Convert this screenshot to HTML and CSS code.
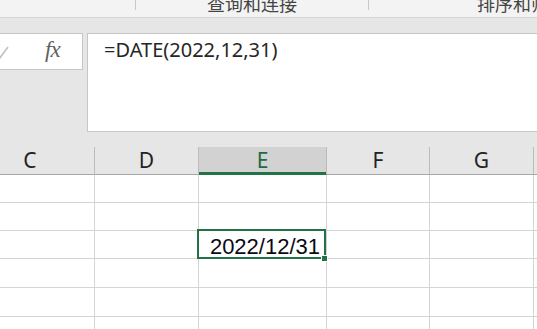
FILE: index.html
```html
<!DOCTYPE html>
<html>
<head>
	<title>DATE</title>
	<meta charset="UTF-8">
	<link rel="stylesheet" href="styles.css">
</head>
<body>

    <div class="ribbon">
        <div class="group first"></div>
        <div class="group mid">查询和连接</div>
        <div class="group last">排序和筛选</div>
    </div>

    <div class="bar">
        <div class="namebox">
            <svg class="ok" width="10" height="16" viewBox="0 0 10 16">
                <path d="M-6 6 L-1 13 L8 1" fill="none" stroke="#c4c4c4" stroke-width="1.8"/>
            </svg>
            <span class="fx">fx</span>
        </div>
        <div class="formula">=DATE(2022,12,31)</div>
    </div>

    <div class="sheet">
        <div class="head">C</div>
        <div class="head">D</div>
        <div class="head sel">E</div>
        <div class="head">F</div>
        <div class="head">G</div>
        <div class="head"></div>

        <div class="cell"></div><div class="cell"></div><div class="cell"></div><div class="cell"></div><div class="cell"></div><div class="cell"></div>
        <div class="cell"></div><div class="cell"></div><div class="cell"></div><div class="cell"></div><div class="cell"></div><div class="cell"></div>
        <div class="cell"></div><div class="cell"></div><div class="cell active">2022/12/31<span class="handle"></span></div><div class="cell"></div><div class="cell"></div><div class="cell"></div>
        <div class="cell"></div><div class="cell"></div><div class="cell"></div><div class="cell"></div><div class="cell"></div><div class="cell"></div>
        <div class="cell"></div><div class="cell"></div><div class="cell"></div><div class="cell"></div><div class="cell"></div><div class="cell"></div>
        <div class="cell"></div><div class="cell"></div><div class="cell"></div><div class="cell"></div><div class="cell"></div><div class="cell"></div>
    </div>

</body>
</html>
```

FILE: styles.css
```css
* {
    box-sizing: border-box;
}
body {
    margin: 0;
    width: 537px;
    height: 329px;
    overflow: hidden;
    background-color: #e6e6e6;
    font-family: "Noto Sans", "Open Sans", sans-serif;
}

/* ribbon strip, clipped at the top */
.ribbon {
    display: flex;
    height: 18px;
    background-color: #f3f3f3;
    border-bottom: 1px solid #d5d5d5;
    overflow: hidden;
}
.group {
    flex: none;
    text-align: center;
    font-family: "Noto Sans CJK SC", sans-serif;
    font-size: 18px;
    line-height: 18px;
    color: #444444;
    margin-top: -6px;
}
.group.first {
    width: 136px;
}
.group.mid {
    width: 233px;
}
.group.last {
    width: 306px;
}
.group.first, .group.mid {
    border-right: 1px solid #c8c8c8;
    height: 16px;
}

/* name box + formula */
.bar {
    display: flex;
    align-items: flex-start;
    padding-top: 15px;
}
.namebox {
    display: flex;
    align-items: center;
    width: 83px;
    height: 37px;
    background-color: white;
    border: 1px solid #c6c6c6;
    border-left: none;
    margin-right: 4px;
}
.ok {
    margin-top: 4px;
}
.fx {
    margin-left: 35px;
    font-family: "Liberation Serif", serif;
    font-style: italic;
    font-size: 23px;
    color: #5f5f5f;
    margin-top: -3px;
    letter-spacing: -1px;
}
.formula {
    flex: 1;
    height: 99px;
    margin-right: -2px;
    background-color: white;
    border: 1px solid #c6c6c6;
    padding: 2px 0 0 16px;
    font-size: 20px;
    line-height: 28px;
    color: #262626;
}

/* grid */
.sheet {
    display: grid;
    grid-template-columns: 129px 104px 128px 103px 104px 104px;
    grid-template-rows: 28px 28px 28px 28px 29px 29px 29px;
    margin-top: 15px;
    margin-left: -34px;
}
.head {
    border-right: 1px solid #bcbcbc;
    border-bottom: 1px solid #a8a8a8;
    text-align: center;
    font-size: 21px;
    line-height: 27px;
    color: #222222;
}
.head.sel {
    background-color: #d2d2d2;
    color: #1f6b40;
    box-shadow: inset 0 -2px 0 #217346;
    border-bottom-color: #217346;
}
.cell {
    background-color: white;
    border-right: 1px solid #d4d4d4;
    border-bottom: 1px solid #d4d4d4;
}
.cell.active {
    position: relative;
    text-align: right;
    padding: 5px 6px 0 0;
    font-family: "Liberation Sans", Arial, sans-serif;
    font-size: 22px;
    line-height: 22px;
    color: #0a0a14;
}
.cell.active::after {
    content: "";
    position: absolute;
    top: -2px;
    left: -2px;
    right: 0;
    bottom: -1px;
    border: 2px solid #217346;
}
.handle {
    position: absolute;
    left: 122px;
    top: 24px;
    width: 7px;
    height: 7px;
    background-color: #217346;
    border: 1px solid white;
    z-index: 1;
}
```
